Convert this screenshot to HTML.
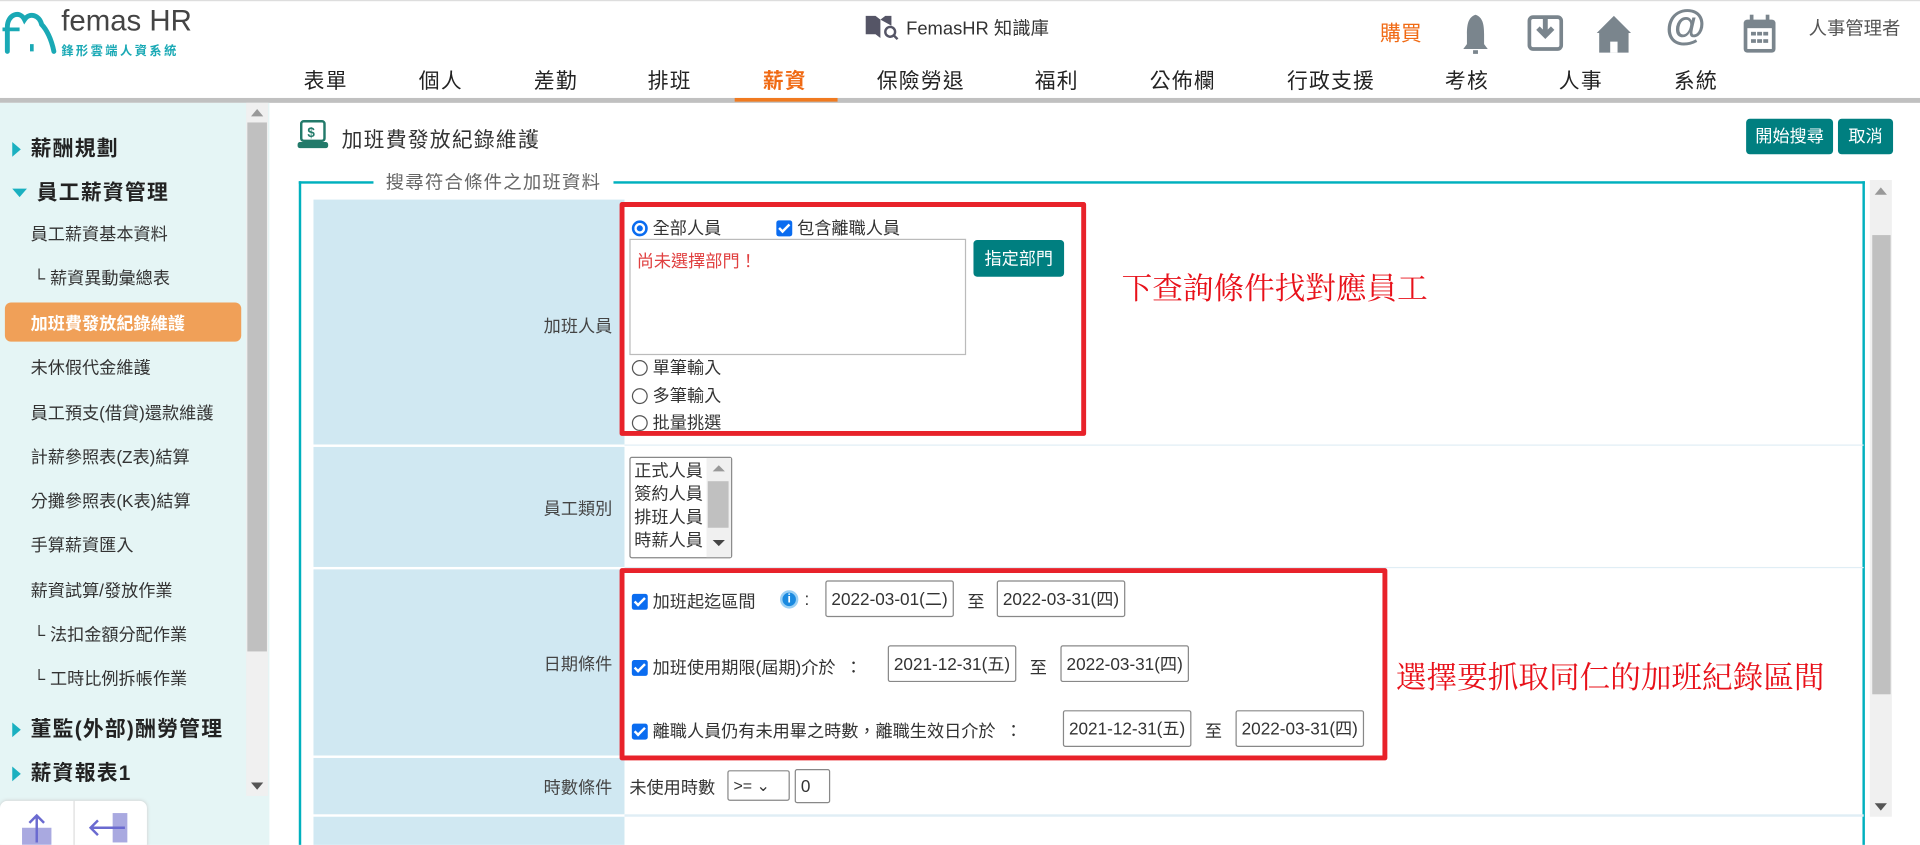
<!DOCTYPE html>
<html><head><meta charset="utf-8"><style>
*{margin:0;padding:0;box-sizing:border-box}
html,body{width:1920px;height:845px;overflow:hidden;background:#fff}
body{font-family:"Liberation Sans","Noto Sans CJK TC",sans-serif;color:#333;position:relative}
#w{position:absolute;left:0;top:0;width:1568px;height:690px;transform:scale(1.22449);transform-origin:0 0;overflow:hidden}
.a{position:absolute;white-space:nowrap}
.nav{font-size:17px;color:#222;top:52px;letter-spacing:1px}
.side{font-size:14px;color:#333}
.sh{font-size:17px;color:#222;font-weight:bold;letter-spacing:1px}
.tri{display:inline-block;width:0;height:0;border-top:6px solid transparent;border-bottom:6px solid transparent;border-left:7px solid #1ab0c0;margin-right:8px;vertical-align:-1px}
.lbl{font-size:14px;color:#444;text-align:right}
.v{font-size:14px;color:#333}
.cb{display:inline-block;width:13px;height:13px;background:#0a6cf0;border-radius:2px;vertical-align:-2px;margin-right:4px;position:relative}
.cb:after{content:"";position:absolute;left:4px;top:1px;width:3px;height:7px;border:solid #fff;border-width:0 2px 2px 0;transform:rotate(45deg)}
.rd{display:inline-block;width:13px;height:13px;border:1px solid #555;border-radius:50%;vertical-align:-2px;margin-right:4px}
.inp{position:absolute;height:30px;border:1px solid #888;border-radius:2px;font-size:14px;line-height:28px;padding:0 4px;color:#333}
.btn{position:absolute;background:#007f80;color:#fff;font-size:14px;border-radius:3px;text-align:center}
.red{position:absolute;border:4px solid #e8222a;border-radius:2px}
.ann{position:absolute;color:#e8111a;font-size:25px;font-family:"Noto Serif CJK SC","Liberation Serif",serif;white-space:nowrap}
.ic{position:absolute;top:10px}
</style></head><body><div id="w">
<div class="a" style="top:0;left:0;width:1568px;height:1px;background:#ddd"></div>
<svg class="a" style="left:2px;top:6px" width="46" height="40" viewBox="0 0 46 40"><path d="M4 36 L4 16 C4 6 14 2 18 10 C22 4 30 6 32 14 C36 18 40 26 42 36" fill="none" stroke="#1aa9b5" stroke-width="4" stroke-linecap="round"/><path d="M0 18 H14" stroke="#1aa9b5" stroke-width="3"/><path d="M24 30 V36" stroke="#1aa9b5" stroke-width="3"/></svg>
<div class="a" style="left:50px;top:4px;font-size:24px;color:#444">femas HR</div>
<div class="a" style="left:50px;top:33px;font-size:10px;color:#1aa9b5;letter-spacing:2px;font-weight:bold">鋒形雲端人資系統</div>
<svg class="a" style="left:706px;top:11px" width="28" height="22" viewBox="0 0 28 22"><path d="M1 2 L9 2 L13 5 L13 20 L9 17 L1 17 Z M13 5 L17 2 L22 2 L22 10" fill="#556" /><circle cx="21" cy="15" r="4" fill="none" stroke="#556" stroke-width="2"/><path d="M24 18 L27 21" stroke="#556" stroke-width="2"/></svg>
<div class="a" style="left:740px;top:12px;font-size:15px;color:#333">FemasHR 知識庫</div>
<div class="a" style="left:1127px;top:13px;font-size:17px;color:#f06a14">購買</div>
<svg class="ic" style="left:1193px" width="24" height="36" viewBox="0 0 24 36"><path d="M12 2 C6 4 5 10 5 18 L5 26 L2 30 L22 30 L19 26 L19 18 C19 10 18 4 12 2Z" fill="#7a858d"/><rect x="10" y="31" width="4" height="3" fill="#7a858d"/></svg>
<svg class="ic" style="left:1247px" width="30" height="34" viewBox="0 0 30 34"><rect x="2" y="4" width="26" height="26" rx="3" fill="none" stroke="#7a858d" stroke-width="3"/><path d="M15 4 V18 M9 13 L15 19 L21 13" stroke="#7a858d" stroke-width="4" fill="none"/></svg>
<svg class="ic" style="left:1303px" width="30" height="34" viewBox="0 0 30 34"><path d="M15 3 L29 17 L27 17 L27 33 L3 33 L3 17 L1 17 Z" fill="#7a858d"/><rect x="12" y="24" width="6" height="9" fill="#fff"/></svg>
<div class="a" style="left:1360px;top:2px;font-size:34px;color:#7a858d;font-weight:bold">@</div>
<svg class="ic" style="left:1422px" width="30" height="34" viewBox="0 0 30 34"><rect x="2" y="6" width="26" height="27" rx="3" fill="#7a858d"/><rect x="5" y="13" width="20" height="17" fill="#fff"/><rect x="7" y="2" width="3" height="7" fill="#7a858d"/><rect x="20" y="2" width="3" height="7" fill="#7a858d"/><g fill="#7a858d"><rect x="8" y="16" width="4" height="3"/><rect x="13" y="16" width="4" height="3"/><rect x="18" y="16" width="4" height="3"/><rect x="8" y="22" width="4" height="3"/><rect x="13" y="22" width="4" height="3"/><rect x="18" y="22" width="4" height="3"/></g></svg>
<div class="a" style="left:1477px;top:12px;font-size:15px;color:#555">人事管理者</div>
<div class="a nav" style="left:248px">表單</div>
<div class="a nav" style="left:342px">個人</div>
<div class="a nav" style="left:436px">差勤</div>
<div class="a nav" style="left:529px">排班</div>
<div class="a nav" style="left:623px;color:#f06a14;font-weight:bold">薪資</div>
<div class="a nav" style="left:716px">保險勞退</div>
<div class="a nav" style="left:845px">福利</div>
<div class="a nav" style="left:939px">公佈欄</div>
<div class="a nav" style="left:1051px">行政支援</div>
<div class="a nav" style="left:1180px">考核</div>
<div class="a nav" style="left:1273px">人事</div>
<div class="a nav" style="left:1367px">系統</div>
<div class="a" style="left:0;top:80px;width:1568px;height:4px;background:#c0c0c0"></div>
<div class="a" style="left:600px;top:80px;width:84px;height:3px;background:#f07a20"></div>
<div class="a" style="left:0;top:84px;width:220px;height:610px;background:#e5f5f5"></div>
<div class="a" style="left:201px;top:84px;width:18px;height:566px;background:#f0f0f0"></div>
<div class="a" style="left:202px;top:100px;width:16px;height:432px;background:#c0c0c0"></div>
<div class="a" style="left:205px;top:89px;border-left:5px solid transparent;border-right:5px solid transparent;border-bottom:6px solid #999"></div>
<div class="a" style="left:205px;top:639px;border-left:5px solid transparent;border-right:5px solid transparent;border-top:6px solid #555"></div>
<div class="a sh" style="left:10px;top:107px"><span class="tri"></span>薪酬規劃</div>
<div class="a sh" style="left:10px;top:143px"><span class="tri" style="border-left:6px solid transparent;border-right:6px solid transparent;border-top:7px solid #1ab0c0;border-bottom:0;vertical-align:2px"></span>員工薪資管理</div>
<div class="a side" style="left:25px;top:181px">員工薪資基本資料</div>
<div class="a side" style="left:27px;top:217px">└ 薪資異動彙總表</div>
<div class="a" style="left:4px;top:247px;width:193px;height:32px;background:#f0a058;border-radius:5px"></div>
<div class="a side" style="left:25px;top:254px;color:#fff;font-weight:bold">加班費發放紀錄維護</div>
<div class="a side" style="left:25px;top:290px">未休假代金維護</div>
<div class="a side" style="left:25px;top:327px">員工預支(借貸)還款維護</div>
<div class="a side" style="left:25px;top:363px">計薪參照表(Z表)結算</div>
<div class="a side" style="left:25px;top:399px">分攤參照表(K表)結算</div>
<div class="a side" style="left:25px;top:435px">手算薪資匯入</div>
<div class="a side" style="left:25px;top:472px">薪資試算/發放作業</div>
<div class="a side" style="left:27px;top:508px">└ 法扣金額分配作業</div>
<div class="a side" style="left:27px;top:544px">└ 工時比例拆帳作業</div>
<div class="a sh" style="left:10px;top:581px"><span class="tri"></span>董監(外部)酬勞管理</div>
<div class="a sh" style="left:10px;top:617px"><span class="tri"></span>薪資報表1</div>
<div class="a" style="left:0;top:654px;width:120px;height:60px;background:#fff;border-radius:6px;box-shadow:0 0 3px #ccc"></div>
<div class="a" style="left:60px;top:654px;width:1px;height:40px;background:#ddd"></div>
<svg class="a" style="left:15px;top:664px" width="30" height="26"><rect x="3" y="12" width="24" height="14" fill="#a9a9e0"/><path d="M15 2 V24 M9 8 L15 2 L21 8" stroke="#6a6ad0" stroke-width="2" fill="none"/></svg>
<svg class="a" style="left:72px;top:662px" width="34" height="28"><rect x="20" y="2" width="12" height="24" fill="#a9a9e0"/><path d="M2 14 H30 M8 8 L2 14 L8 20" stroke="#6a6ad0" stroke-width="2" fill="none"/></svg>
<svg class="a" style="left:243px;top:98px" width="26" height="24"><rect x="3" y="1" width="19" height="16" rx="2" fill="none" stroke="#227a6a" stroke-width="2"/><text x="8" y="14" font-size="11" font-weight="bold" fill="#227a6a" font-family="Liberation Sans">$</text><rect x="0" y="18" width="25" height="5" rx="2" fill="#227a6a"/></svg>
<div class="a" style="left:279px;top:100px;font-size:17px;color:#333;letter-spacing:1px">加班費發放紀錄維護</div>
<div class="btn" style="left:1426px;top:97px;width:71px;height:29px;line-height:29px">開始搜尋</div>
<div class="btn" style="left:1501px;top:97px;width:45px;height:29px;line-height:29px">取消</div>
<div class="a" style="left:244px;top:148px;width:1279px;height:560px;border:2px solid #00b0be;border-bottom:0"></div>
<div class="a" style="left:305px;top:138px;background:#fff;padding:0 10px;font-size:15px;color:#666;letter-spacing:1px">搜尋符合條件之加班資料</div>
<div class="a" style="left:1527px;top:147px;width:18px;height:520px;background:#f0f0f0"></div>
<div class="a" style="left:1529px;top:192px;width:15px;height:375px;background:#c0c0c0"></div>
<div class="a" style="left:1531px;top:153px;border-left:5px solid transparent;border-right:5px solid transparent;border-bottom:6px solid #999"></div>
<div class="a" style="left:1531px;top:656px;border-left:5px solid transparent;border-right:5px solid transparent;border-top:6px solid #555"></div>
<div class="a" style="left:256px;top:163px;width:254px;height:200px;background:#d0e8f2"></div>
<div class="a" style="left:256px;top:365px;width:254px;height:98px;background:#d0e8f2"></div>
<div class="a" style="left:256px;top:465px;width:254px;height:152px;background:#d0e8f2"></div>
<div class="a" style="left:256px;top:619px;width:254px;height:46px;background:#d0e8f2"></div>
<div class="a" style="left:256px;top:667px;width:254px;height:40px;background:#d0e8f2"></div>
<div class="a" style="left:510px;top:363px;width:1012px;height:1px;background:#e0eef5"></div>
<div class="a" style="left:510px;top:463px;width:1012px;height:1px;background:#e0eef5"></div>
<div class="a" style="left:510px;top:665px;width:1012px;height:2px;background:#e0eef5"></div>
<div class="a lbl" style="left:256px;width:244px;top:256px">加班人員</div>
<div class="a lbl" style="left:256px;width:244px;top:405px">員工類別</div>
<div class="a lbl" style="left:256px;width:244px;top:532px">日期條件</div>
<div class="a lbl" style="left:256px;width:244px;top:633px">時數條件</div>
<div class="a v" style="left:516px;top:176px"><span class="rd" style="border:2px solid #0a6cf0;box-shadow:inset 0 0 0 2px #fff;background:#0a6cf0"></span>全部人員</div>
<div class="a v" style="left:634px;top:176px"><span class="cb"></span>包含離職人員</div>
<div class="a" style="left:514px;top:195px;width:275px;height:95px;border:1px solid #bbb"></div>
<div class="a" style="left:520px;top:203px;font-size:14px;color:#e04040">尚未選擇部門！</div>
<div class="btn" style="left:795px;top:196px;width:74px;height:30px;line-height:30px">指定部門</div>
<div class="a v" style="left:516px;top:290px"><span class="rd"></span>單筆輸入</div>
<div class="a v" style="left:516px;top:313px"><span class="rd"></span>多筆輸入</div>
<div class="a v" style="left:516px;top:335px"><span class="rd"></span>批量挑選</div>
<div class="a" style="left:514px;top:373px;width:84px;height:83px;border:1px solid #888;border-radius:2px;background:#fff"></div>
<div class="a" style="left:577px;top:374px;width:20px;height:81px;background:#f0f0f0"></div>
<div class="a" style="left:578px;top:393px;width:17px;height:38px;background:#c0c0c0"></div>
<div class="a" style="left:582px;top:380px;border-left:5px solid transparent;border-right:5px solid transparent;border-bottom:5px solid #999"></div>
<div class="a" style="left:582px;top:441px;border-left:5px solid transparent;border-right:5px solid transparent;border-top:5px solid #444"></div>
<div class="a v" style="left:518px;top:375px;line-height:19px;white-space:normal;width:60px">正式人員<br>簽約人員<br>排班人員<br>時薪人員</div>
<div class="a v" style="left:516px;top:481px"><span class="cb"></span>加班起迄區間</div>
<div class="a" style="left:637px;top:482px;width:15px;height:15px;border-radius:50%;background:#1a8ae0;border:2px solid #9ad0f5;color:#fff;font-size:10px;text-align:center;line-height:11px;font-weight:bold">i</div>
<div class="a v" style="left:657px;top:481px">:</div>
<div class="inp" style="left:674px;top:474px">2022-03-01(二)</div>
<div class="a v" style="left:790px;top:481px">至</div>
<div class="inp" style="left:814px;top:474px">2022-03-31(四)</div>
<div class="a v" style="left:516px;top:535px"><span class="cb"></span>加班使用期限(屆期)介於 &nbsp;：</div>
<div class="inp" style="left:725px;top:527px">2021-12-31(五)</div>
<div class="a v" style="left:841px;top:535px">至</div>
<div class="inp" style="left:866px;top:527px">2022-03-31(四)</div>
<div class="a v" style="left:516px;top:587px"><span class="cb"></span>離職人員仍有未用畢之時數，離職生效日介於 &nbsp;：</div>
<div class="inp" style="left:868px;top:580px">2021-12-31(五)</div>
<div class="a v" style="left:984px;top:587px">至</div>
<div class="inp" style="left:1009px;top:580px">2022-03-31(四)</div>
<div class="a v" style="left:514px;top:633px">未使用時數</div>
<div class="inp" style="left:594px;top:629px;width:51px;height:25px;line-height:23px;font-size:13px">&gt;= ⌄</div>
<div class="inp" style="left:649px;top:628px;width:29px;height:28px;line-height:26px">0</div>
<div class="red" style="left:506px;top:165px;width:381px;height:191px"></div>
<div class="red" style="left:506px;top:464px;width:627px;height:157px"></div>
<div class="ann" style="left:916px;top:216px">下查詢條件找對應員工</div>
<div class="ann" style="left:1140px;top:534px">選擇要抓取同仁的加班紀錄區間</div>
</div></body></html>
